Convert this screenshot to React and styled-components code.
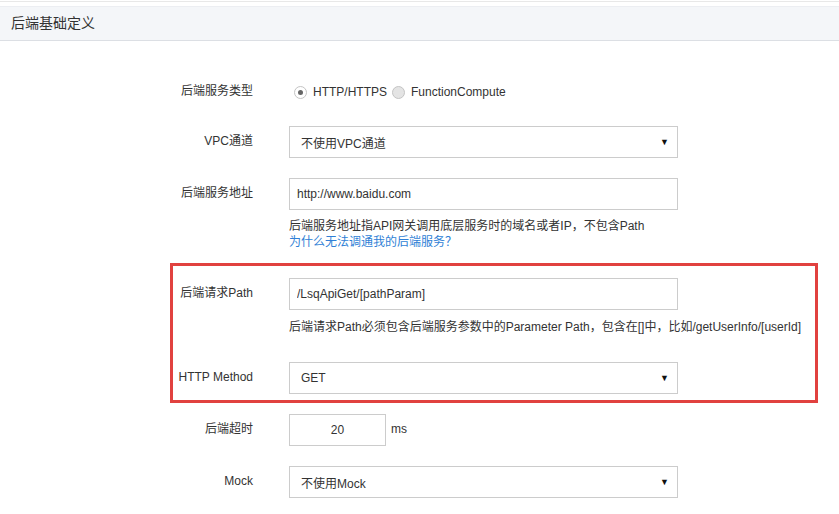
import React from 'react';
import styled, { createGlobalStyle } from 'styled-components';

const GlobalStyle = createGlobalStyle`
    body {
        margin: 0;
        background: #fff;
        font-family: "Liberation Sans", "Noto Sans CJK SC", sans-serif;
        color: #333;
    }
`;

function Select({ value }) {
    return (
        <SelectBox>
            <span>{value}</span>
            <Arrow>▼</Arrow>
        </SelectBox>
    );
}

function App() {
    return (
        <Page>
            <GlobalStyle />
            <Header>后端基础定义</Header>
            <Form>
                <Row $mb={18}>
                    <Label>后端服务类型</Label>
                    <Radios>
                        <RadioItem>
                            <Radio $checked />
                            HTTP/HTTPS
                        </RadioItem>
                        <RadioItem>
                            <Radio />
                            FunctionCompute
                        </RadioItem>
                    </Radios>
                </Row>
                <Row $mb={20}>
                    <Label>VPC通道</Label>
                    <Select value='不使用VPC通道' />
                </Row>
                <Row $mb={13}>
                    <Label>后端服务地址</Label>
                    <Control>
                        <TextInput readOnly value='http://www.baidu.com' />
                        <Help>
                            后端服务地址指API网关调用底层服务时的域名或者IP，不包含Path
                            <br />
                            <HelpLink>为什么无法调通我的后端服务？</HelpLink>
                        </Help>
                    </Control>
                </Row>
                <Highlight>
                    <Row $mb={27}>
                        <Label>后端请求Path</Label>
                        <Control>
                            <TextInput readOnly value='/LsqApiGet/[pathParam]' />
                            <Help $wide>
                                后端请求Path必须包含后端服务参数中的Parameter Path，包含在[]中，比如/getUserInfo/[userId]
                            </Help>
                        </Control>
                    </Row>
                    <Row $mb={0}>
                        <Label>HTTP Method</Label>
                        <Select value='GET' />
                    </Row>
                </Highlight>
                <Row $mb={20}>
                    <Label>后端超时</Label>
                    <Inline>
                        <TextInput $small readOnly value='20' />
                        <Unit>ms</Unit>
                    </Inline>
                </Row>
                <Row $mb={0}>
                    <Label>Mock</Label>
                    <Select value='不使用Mock' />
                </Row>
            </Form>
        </Page>
    );
}

const Page = styled.div`
    margin-top: 1px;
    border-top: 1px solid #e8e8e8;
    height: 512px;
`;

const Header = styled.div`
    margin-top: 4px;
    height: 35px;
    box-sizing: border-box;
    padding-left: 11px;
    background: #f4f6f9;
    border-top: 1px solid #eceef2;
    border-bottom: 1px solid #dcdfe4;
    font-size: 14px;
    line-height: 32px;
    color: #333;
`;

const Form = styled.div`
    padding: 35px 0 0 173px;
`;

const Row = styled.div`
    display: flex;
    align-items: flex-start;
    gap: 36px;
    margin-bottom: ${(p) => p.$mb}px;
`;

const Label = styled.div`
    width: 80px;
    flex: none;
    text-align: right;
    font-size: 12px;
    line-height: 20px;
    padding-top: 5px;
    color: #333;
    white-space: nowrap;
`;

const Control = styled.div`
    display: flex;
    flex-direction: column;
`;

const Radios = styled.div`
    display: flex;
    align-items: center;
    height: 32px;
    padding-left: 5px;
    gap: 5px;
    font-size: 12px;
`;

const RadioItem = styled.label`
    display: flex;
    align-items: center;
    gap: 6px;
    color: #333;
`;

const Radio = styled.span`
    width: 11px;
    height: 11px;
    border-radius: 50%;
    border: 1px solid #c4c4c4;
    background: ${(p) => (p.$checked ? '#fff' : '#e4e4e4')};
    position: relative;
    &::after {
        content: '';
        display: ${(p) => (p.$checked ? 'block' : 'none')};
        position: absolute;
        left: 3px;
        top: 3px;
        width: 5px;
        height: 5px;
        border-radius: 50%;
        background: #666;
    }
`;

const SelectBox = styled.div`
    width: 389px;
    height: 32px;
    box-sizing: border-box;
    border: 1px solid #ccc;
    display: flex;
    align-items: center;
    justify-content: space-between;
    padding: 0 8px 0 11px;
    font-size: 12px;
    color: #333;
`;

const Arrow = styled.span`
    font-size: 9px;
    color: #111;
`;

const TextInput = styled.input`
    width: ${(p) => (p.$small ? '97px' : '389px')};
    height: 32px;
    box-sizing: border-box;
    border: 1px solid #ccc;
    outline: none;
    padding: 0 7px;
    font-family: inherit;
    font-size: 12px;
    color: #333;
    text-align: ${(p) => (p.$small ? 'center' : 'left')};
`;

const Help = styled.div`
    margin-top: ${(p) => (p.$wide ? '9px' : '8px')};
    font-size: 12px;
    line-height: 16px;
    color: #333;
    white-space: nowrap;
`;

const HelpLink = styled.a`
    color: #2f7fd6;
    cursor: pointer;
`;

const Highlight = styled.div`
    margin-left: -3px;
    width: 648px;
    box-sizing: border-box;
    border: 3px solid #e1413f;
    padding: 12px 0 6px;
    margin-bottom: 11px;
`;

const Inline = styled.div`
    display: flex;
    align-items: center;
    gap: 5px;
`;

const Unit = styled.span`
    font-size: 12px;
    color: #333;
    margin-top: -2px;
`;

export default App;
